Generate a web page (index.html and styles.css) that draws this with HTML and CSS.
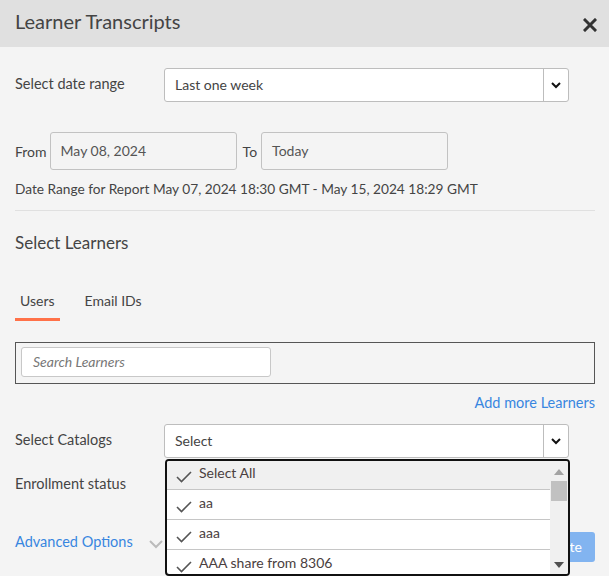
FILE: index.html
```html
<!DOCTYPE html>
<html>
<head>
<meta charset="utf-8">
<link rel="stylesheet" href="styles.css">
</head>
<body>
<div class="modal">
  <div class="header">
    <div class="title">Learner Transcripts</div>
    <svg class="close" width="14" height="14" viewBox="0 0 14 14"><path d="M2 2 L12 12 M12 2 L2 12" stroke="#333" stroke-width="3" stroke-linecap="square"/></svg>
  </div>
  <div class="content">
    <div class="row date-row">
      <div class="label">Select date range</div>
      <div class="select">
        <span class="sel-text">Last one week</span>
        <span class="sel-btn"><svg width="10" height="7" viewBox="0 0 10 7"><path d="M1 1 L5 5 L9 1" fill="none" stroke="#111" stroke-width="2"/></svg></span>
      </div>
    </div>
    <div class="from-row">
      <span class="fl">From</span>
      <div class="dinput">May 08, 2024</div>
      <span class="tl">To</span>
      <div class="dinput">Today</div>
    </div>
    <div class="range-text">Date Range for Report May 07, 2024 18:30 GMT - May 15, 2024 18:29 GMT</div>
    <div class="divider"></div>
    <div class="section-title">Select Learners</div>
    <div class="tabs">
      <div class="tab active">Users</div>
      <div class="tab">Email IDs</div>
    </div>
    <div class="search-box">
      <div class="search-input">Search Learners</div>
    </div>
    <div class="add-more">Add more Learners</div>
    <div class="row cat-row">
      <div class="label">Select Catalogs</div>
      <div class="select-wrap">
        <div class="select">
          <span class="sel-text">Select</span>
          <span class="sel-btn"><svg width="10" height="7" viewBox="0 0 10 7"><path d="M1 1 L5 5 L9 1" fill="none" stroke="#111" stroke-width="2"/></svg></span>
        </div>
        <div class="dropdown">
          <div class="items">
            <div class="item first"><svg class="chk" width="16" height="12" viewBox="0 0 16 12"><path d="M1 6 L5.5 10.5 L15 1" fill="none" stroke="#555" stroke-width="1.6"/></svg><span>Select All</span></div>
            <div class="item"><svg class="chk" width="16" height="12" viewBox="0 0 16 12"><path d="M1 6 L5.5 10.5 L15 1" fill="none" stroke="#555" stroke-width="1.6"/></svg><span>aa</span></div>
            <div class="item"><svg class="chk" width="16" height="12" viewBox="0 0 16 12"><path d="M1 6 L5.5 10.5 L15 1" fill="none" stroke="#555" stroke-width="1.6"/></svg><span>aaa</span></div>
            <div class="item"><svg class="chk" width="16" height="12" viewBox="0 0 16 12"><path d="M1 6 L5.5 10.5 L15 1" fill="none" stroke="#555" stroke-width="1.6"/></svg><span>AAA share from 8306</span></div>
          </div>
          <div class="scrollbar">
            <svg class="arr-up" width="10" height="6" viewBox="0 0 10 6"><path d="M0 6 L5 0 L10 6 Z" fill="#a3a3a3"/></svg>
            <div class="thumb"></div>
            <svg class="arr-down" width="10" height="6" viewBox="0 0 10 6"><path d="M0 0 L5 6 L10 0 Z" fill="#505050"/></svg>
          </div>
        </div>
      </div>
    </div>
    <div class="row enroll-row">
      <div class="label">Enrollment status</div>
    </div>
    <div class="adv-row">
      <div class="adv">Advanced Options <svg class="adv-chev" width="14" height="9" viewBox="0 0 14 9"><path d="M1 1 L7 7 L13 1" fill="none" stroke="#bbb" stroke-width="2"/></svg></div>
      <div class="btn">Generate</div>
    </div>
  </div>
</div>
</body>
</html>
```
FILE: styles.css
```css
* { box-sizing: border-box; }
html, body { margin: 0; padding: 0; }
body {
  width: 609px;
  height: 576px;
  overflow: hidden;
  background: #f4f4f4;
  font-family: "Lato", "Noto Sans", sans-serif;
  color: #454545;
  font-size: 14px;
}
.header {
  height: 47px;
  background: #e0e0e0;
  display: flex;
  align-items: center;
  justify-content: space-between;
  padding: 0 12px 0 15px;
}
.title {
  font-size: 20px;
  color: #444;
  margin-top: -6px;
}
.close { margin-top: 2px; }
.content {
  padding: 0 14px 0 15px;
}
.row {
  display: flex;
  align-items: center;
}
.label {
  width: 149px;
  font-size: 14.5px;
  color: #444;
}
.date-row { margin-top: 21px; }
.date-row .label { margin-top: -3px; }
.select {
  width: 405px;
  height: 34px;
  background: #fff;
  border: 1px solid #bdbdbd;
  border-radius: 3px;
  display: flex;
  align-items: center;
}
.sel-text {
  flex: 1;
  padding-left: 10px;
  padding-bottom: 2px;
  font-size: 14px;
  color: #444;
}
.sel-btn {
  width: 25px;
  height: 100%;
  border-left: 1px solid #bdbdbd;
  display: flex;
  align-items: center;
  justify-content: center;
}
.from-row {
  margin-top: 30px;
  display: flex;
  align-items: center;
}
.fl { margin-right: 3px; color: #444; }
.tl { margin: 0 4px 0 6px; color: #444; }
.dinput {
  width: 187px;
  height: 38px;
  border: 1px solid #c2c2c2;
  border-radius: 3px;
  padding: 9px 0 0 10px;
  color: #555;
  font-size: 14px;
}
.range-text {
  margin-top: 9px;
  line-height: 20px;
  color: #444;
  font-size: 13.7px;
}
.divider {
  margin-top: 11px;
  height: 1px;
  background: #e0e0e0;
}
.section-title {
  margin-top: 22px;
  font-size: 17px;
  color: #444;
  line-height: 20px;
}
.tabs {
  margin-top: 40px;
  display: flex;
}
.tab {
  font-size: 14px;
  color: #444;
  padding: 0 5px 9px 5px;
  margin-right: 20px;
  line-height: 16px;
  border-bottom: 3px solid transparent;
}
.tab.active { border-bottom-color: #ff7148; }
.search-box {
  margin-top: 21px;
  height: 42px;
  border: 1px solid #555;
  padding: 4px 5px;
}
.search-input {
  width: 250px;
  height: 30px;
  background: #fff;
  border: 1px solid #c8c8c8;
  border-radius: 3px;
  font-style: italic;
  color: #777;
  font-size: 14px;
  padding: 5px 0 0 11px;
}
.add-more {
  margin-top: 10px;
  text-align: right;
  color: #3886e0;
  font-size: 14.5px;
  line-height: 18px;
}
.cat-row { margin-top: 12px; }
.cat-row .label { margin-top: -4px; }
.select-wrap { position: relative; }
.dropdown {
  position: absolute;
  left: 1px;
  top: 35px;
  width: 405px;
  height: 117px;
  background: #fff;
  border: 2px solid #111;
  border-radius: 4px;
  display: flex;
  overflow: hidden;
  z-index: 5;
}
.items { flex: 1; }
.item {
  height: 30px;
  border-bottom: 1px solid #c6c6c6;
  display: flex;
  align-items: center;
  padding-left: 9px;
  padding-bottom: 5px;
  font-size: 14px;
  color: #4a4040;
}
.item.first { background: #f0f0f0; height: 29px; }
.chk { margin-right: 7px; margin-top: 9px; }
.scrollbar {
  width: 18px;
  background: #f0f0f0;
  position: relative;
}
.arr-up { position: absolute; left: 4px; top: 8px; }
.arr-down { position: absolute; left: 4px; bottom: 6px; }
.thumb {
  position: absolute;
  left: 1px;
  top: 20px;
  width: 16px;
  height: 20px;
  background: #c1c1c1;
}
.enroll-row { margin-top: 16px; line-height: 20px; }
.adv-row {
  margin-top: 38px;
  display: flex;
  align-items: flex-start;
  justify-content: space-between;
}
.adv {
  color: #3886e0;
  font-size: 14.5px;
  line-height: 20px;
  display: flex;
  align-items: center;
}
.adv-chev { margin-left: 16px; margin-top: 5px; }
.btn {
  height: 30px;
  background: #82b4f0;
  color: #fff;
  border-radius: 3px;
  padding: 6px 13px 0 13px;
  font-size: 14px;
}
```
